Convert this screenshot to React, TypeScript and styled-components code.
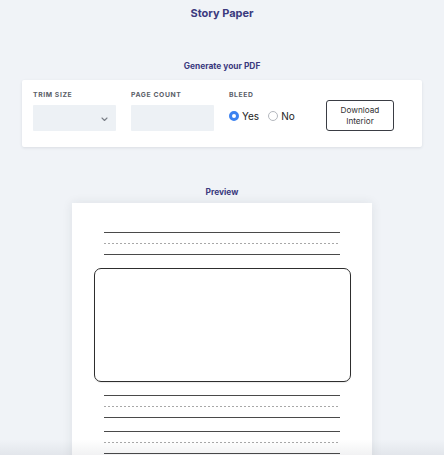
import React, { useState } from "react"
import styled, { createGlobalStyle } from "styled-components"

const GlobalStyle = createGlobalStyle`
  html, body {
    margin: 0;
    padding: 0;
    background: #f0f3f7;
    overflow: hidden;
  }
  body {
    font-family: Inter, "Liberation Sans", sans-serif;
    color: #333;
  }
`

const Chevron: React.FC = () => (
  <svg width="7" height="5" viewBox="0 0 7 5" fill="none">
    <path d="M1 1l2.5 2.5L6 1" stroke="#7a7f87" strokeWidth="1.1" strokeLinecap="round" strokeLinejoin="round" />
  </svg>
)

const WritingLines: React.FC = () => (
  <LineGroup>
    <Rule />
    <Rule dotted />
    <Rule />
  </LineGroup>
)

const App: React.FC = () => {
  const [bleed, setBleed] = useState<"yes" | "no">("yes")
  return (
    <>
      <GlobalStyle />
      <Page>
        <Title>Story Paper</Title>
        <Heading>Generate your PDF</Heading>
        <Card>
          <Field>
            <Label>Trim Size</Label>
            <SelectBox>
              <Chevron />
            </SelectBox>
          </Field>
          <Field>
            <Label>Page Count</Label>
            <InputBox />
          </Field>
          <BleedField>
            <Label>Bleed</Label>
            <RadioRow>
              <RadioOption onClick={() => setBleed("yes")}>
                <RadioDot checked={bleed === "yes"} />
                Yes
              </RadioOption>
              <RadioOption onClick={() => setBleed("no")}>
                <RadioDot checked={bleed === "no"} />
                No
              </RadioOption>
            </RadioRow>
          </BleedField>
          <DownloadButton>
            Download
            <br />
            Interior
          </DownloadButton>
        </Card>
        <PreviewHeading>Preview</PreviewHeading>
        <Paper>
          <WritingLines />
          <PictureBox />
          <WritingLines />
          <WritingLines />
          <WritingLines />
        </Paper>
      </Page>
      <BottomFade />
    </>
  )
}

export default App

const Page = styled.div`
  display: flex;
  flex-direction: column;
  align-items: center;
  padding-top: 6px;
`

const Title = styled.h1`
  margin: 0;
  font-size: 11px;
  line-height: 14px;
  font-weight: 700;
  color: #3b3a7e;
`

const Heading = styled.h2`
  margin: 40px 0 0;
  font-size: 8.4px;
  line-height: 12px;
  font-weight: 700;
  color: #3b3a7e;
`

const PreviewHeading = styled(Heading)`
  margin: 39px 0 0;
`

const Card = styled.div`
  box-sizing: border-box;
  width: 400px;
  margin-top: 8px;
  display: flex;
  align-items: flex-start;
  gap: 15px;
  padding: 10px 11px 16px;
  background: #fff;
  border-radius: 2px;
  box-shadow: 0 1px 3px rgba(30, 40, 60, 0.1);
`

const Field = styled.div`
  display: flex;
  flex-direction: column;
  gap: 6px;
  width: 83px;
`

const BleedField = styled(Field)`
  width: 82px;
`

const Label = styled.div`
  font-size: 6.8px;
  line-height: 9px;
  font-weight: 700;
  letter-spacing: 0.6px;
  text-transform: uppercase;
  color: #5b6068;
`

const InputBox = styled.div`
  height: 26px;
  background: #edf1f5;
  border-radius: 1px;
`

const SelectBox = styled(InputBox)`
  display: flex;
  align-items: center;
  justify-content: flex-end;
  padding-right: 8px;
  padding-top: 2px;
  box-sizing: border-box;
`

const RadioRow = styled.div`
  display: flex;
  align-items: center;
  gap: 9px;
  height: 21px;
`

const RadioOption = styled.label`
  display: flex;
  align-items: center;
  gap: 3px;
  font-size: 10px;
  color: #222;
  cursor: pointer;
`

const RadioDot = styled.span<{ checked: boolean }>`
  box-sizing: border-box;
  width: 10px;
  height: 10px;
  border-radius: 50%;
  border: ${(p) => (p.checked ? "3px solid #3c82f0" : "1px solid #b4b8be")};
  background: #fff;
`

const DownloadButton = styled.button`
  box-sizing: border-box;
  width: 68px;
  height: 31px;
  margin-top: 10px;
  padding: 0;
  background: #fff;
  border: 1px solid #3a3d44;
  border-radius: 3px;
  font-family: inherit;
  font-size: 8.2px;
  line-height: 10.5px;
  color: #333;
  cursor: pointer;
`

const Paper = styled.div`
  box-sizing: border-box;
  width: 300px;
  height: 420px;
  margin-top: 5px;
  padding: 29px 22px 0;
  display: flex;
  flex-direction: column;
  align-items: center;
  gap: 13px;
  background: #fff;
  box-shadow: 0 0 10px rgba(30, 40, 60, 0.09);
`

const LineGroup = styled.div`
  width: 236px;
  display: flex;
  flex-direction: column;
  gap: 10px;
`

const Rule = styled.div<{ dotted?: boolean }>`
  height: 1px;
  background: ${(p) =>
    p.dotted
      ? "repeating-linear-gradient(to right, #a8a8a8 0 2px, transparent 2px 4px)"
      : "#4a4a4a"};
`

const PictureBox = styled.div`
  box-sizing: border-box;
  width: 257px;
  height: 114px;
  border: 1.5px solid #2e2e2e;
  border-radius: 7px;
  box-shadow: 0 1px 1px rgba(0, 0, 0, 0.08);
`

const BottomFade = styled.div`
  position: fixed;
  left: 0;
  right: 0;
  bottom: 0;
  height: 16px;
  pointer-events: none;
  background: linear-gradient(to bottom, rgba(0, 0, 0, 0), rgba(30, 40, 60, 0.06));
`
